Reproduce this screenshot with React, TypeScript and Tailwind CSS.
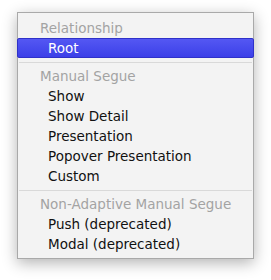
import React from 'react';

const Header: React.FC<{ label: string }> = ({ label }) => (
  <div className="h-[20px] pl-[22px] leading-[20px] text-[#a3a3a3]">{label}</div>
);

const Item: React.FC<{ label: string; selected?: boolean }> = ({ label, selected }) => (
  <div
    className={
      selected
        ? 'h-[20px] pl-[30px] leading-[19px] text-white bg-gradient-to-b from-[#5457f3] to-[#3c3fe8] border border-[#2f31c9] rounded-[2px] -mx-px'
        : 'h-[20px] pl-[30px] leading-[20px] text-[#111]'
    }
  >
    {label}
  </div>
);

const Separator: React.FC = () => (
  <div className="h-[8px] flex items-center px-[1px]">
    <div className="h-px w-full bg-[#d9d9d9]" />
  </div>
);

const App: React.FC = () => {
  return (
    <div className="w-[271px] h-[280px] bg-white pt-[12px] pl-[17px]">
      <div
        className="w-[237px] bg-[#f3f3f3] border border-[#a9a9a9] pt-[5px] pb-[4px] text-[13.5px] shadow-[0_4px_14px_rgba(0,0,0,0.3)]"
        style={{ fontFamily: '"DejaVu Sans", "Liberation Sans", sans-serif' }}
      >
        <Header label="Relationship" />
        <Item label="Root" selected />
        <Separator />
        <Header label="Manual Segue" />
        <Item label="Show" />
        <Item label="Show Detail" />
        <Item label="Presentation" />
        <Item label="Popover Presentation" />
        <Item label="Custom" />
        <Separator />
        <Header label="Non-Adaptive Manual Segue" />
        <Item label="Push (deprecated)" />
        <Item label="Modal (deprecated)" />
      </div>
    </div>
  );
};

export default App;
